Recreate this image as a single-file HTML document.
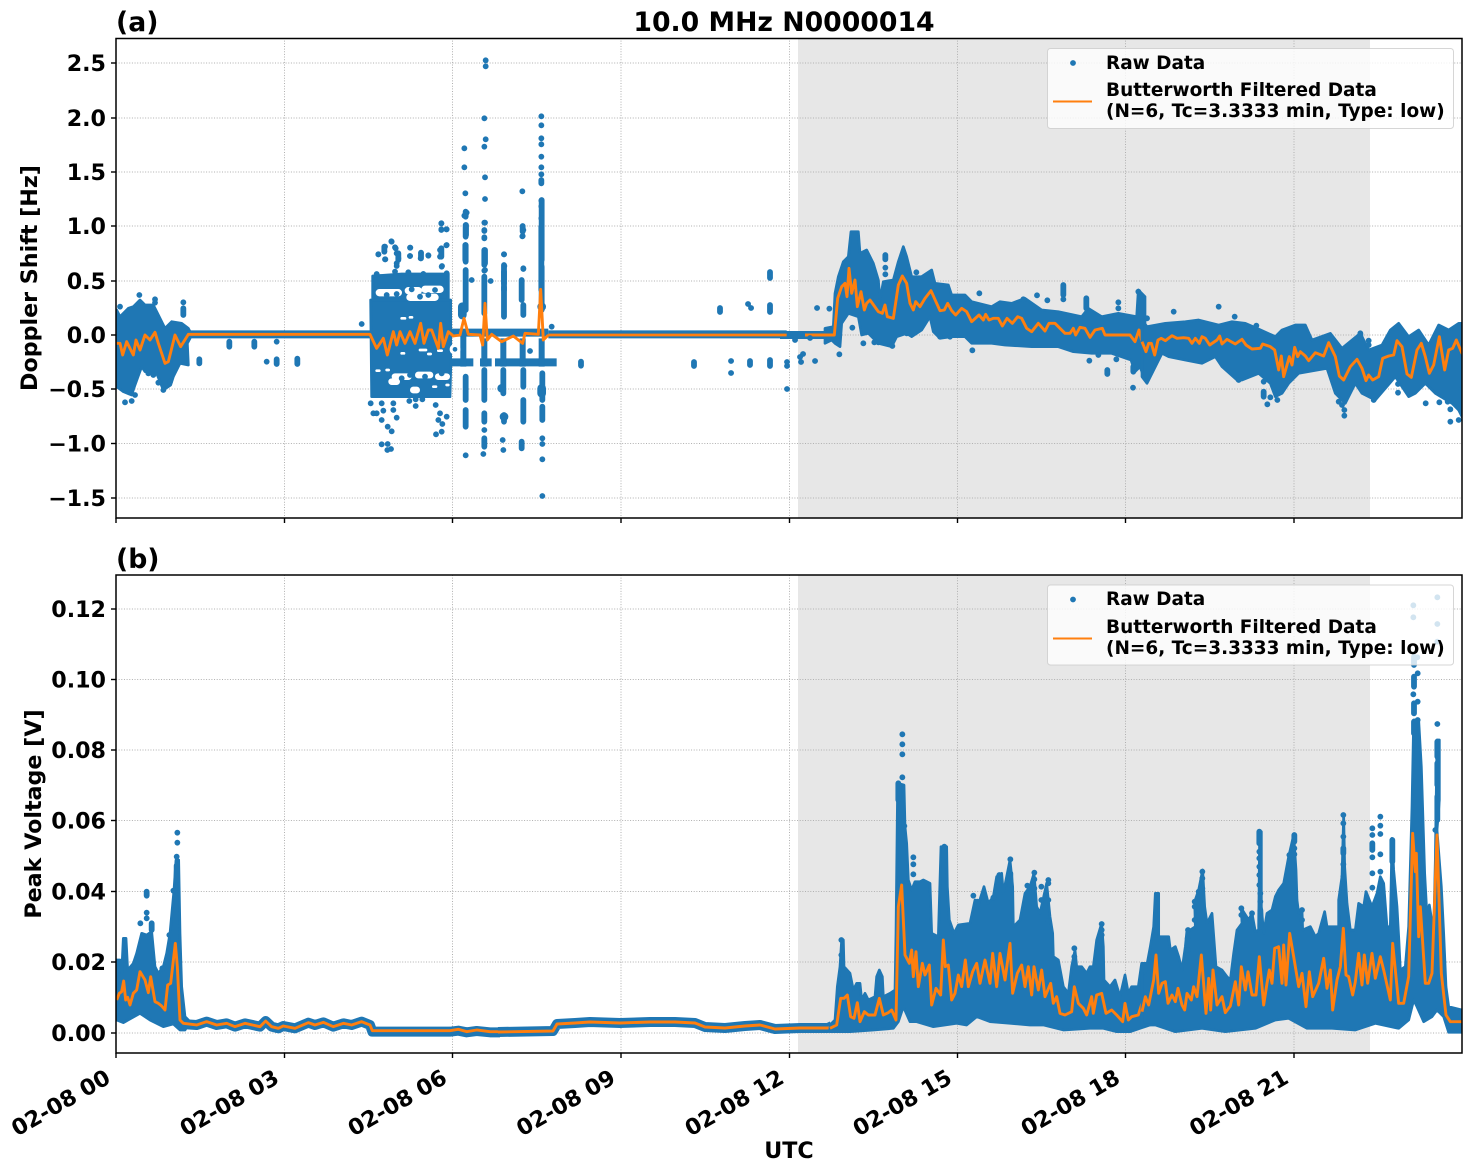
<!DOCTYPE html>
<html><head><meta charset="utf-8"><style>
html,body{margin:0;padding:0;background:#fff}
svg{display:block}
text{font-family:"DejaVu Sans",sans-serif;font-weight:bold;fill:#000}
.tk{font-size:22.2px}
.lg{font-size:18.48px}
.grid line{stroke:#b0b0b0;stroke-width:1;stroke-dasharray:1 1.65}
.tick line{stroke:#000;stroke-width:1.4}
.b{fill:#1f77b4;stroke:#1f77b4;stroke-width:2.7;stroke-linejoin:round;vector-effect:non-scaling-stroke}
.d{fill:none;stroke:#1f77b4;stroke-width:5.8;stroke-linecap:round;vector-effect:non-scaling-stroke}
.o{fill:none;stroke:#ff7f0e;stroke-width:2.9;stroke-linejoin:round;vector-effect:non-scaling-stroke}
</style></head><body>
<svg xmlns="http://www.w3.org/2000/svg" width="1472" height="1172" viewBox="0 0 1472 1172">
<defs>
<clipPath id="ca"><rect x="116" y="38.5" width="1346" height="479.5"/></clipPath>
<clipPath id="cb"><rect x="116" y="575" width="1346" height="478"/></clipPath>
</defs>
<rect width="1472" height="1172" fill="#fff"/>

<!-- shading -->
<rect x="798" y="38.5" width="572" height="479.5" fill="#e7e7e7"/>
<rect x="798" y="575" width="572" height="478" fill="#e7e7e7"/>

<!-- grids -->
<g class="grid">
<line x1="116" x2="1462" y1="63" y2="63"/><line x1="116" x2="1462" y1="118" y2="118"/><line x1="116" x2="1462" y1="172" y2="172"/><line x1="116" x2="1462" y1="226" y2="226"/><line x1="116" x2="1462" y1="281" y2="281"/><line x1="116" x2="1462" y1="335" y2="335"/><line x1="116" x2="1462" y1="389" y2="389"/><line x1="116" x2="1462" y1="443.5" y2="443.5"/><line x1="116" x2="1462" y1="498" y2="498"/>
<line x1="284.5" x2="284.5" y1="38" y2="518"/><line x1="452.5" x2="452.5" y1="38" y2="518"/><line x1="621" x2="621" y1="38" y2="518"/><line x1="789.5" x2="789.5" y1="38" y2="518"/><line x1="957.5" x2="957.5" y1="38" y2="518"/><line x1="1125.5" x2="1125.5" y1="38" y2="518"/><line x1="1294" x2="1294" y1="38" y2="518"/>
<line x1="116" x2="1462" y1="609" y2="609"/><line x1="116" x2="1462" y1="679.5" y2="679.5"/><line x1="116" x2="1462" y1="750" y2="750"/><line x1="116" x2="1462" y1="820.5" y2="820.5"/><line x1="116" x2="1462" y1="891.5" y2="891.5"/><line x1="116" x2="1462" y1="962" y2="962"/><line x1="116" x2="1462" y1="1033" y2="1033"/>
<line x1="284.5" x2="284.5" y1="575" y2="1053"/><line x1="452.5" x2="452.5" y1="575" y2="1053"/><line x1="621" x2="621" y1="575" y2="1053"/><line x1="789.5" x2="789.5" y1="575" y2="1053"/><line x1="957.5" x2="957.5" y1="575" y2="1053"/><line x1="1125.5" x2="1125.5" y1="575" y2="1053"/><line x1="1294" x2="1294" y1="575" y2="1053"/>
</g>

<!-- PANEL A DATA -->
<g clip-path="url(#ca)">
<!-- left + block, crop (100,200) x3 -->
<g transform="translate(100 200) scale(.33333)">
<polygon class="b" points="50,330 60,350 85,325 100,320 120,300 135,315 160,315 170,335 195,385 215,365 245,370 265,385 270,395 270,415 262,430 265,495 240,490 220,530 212,555 190,570 170,520 135,515 125,500 105,555 95,585 70,575 50,560"/>
<path d="M265 403H810" fill="none" stroke="#1f77b4" stroke-width="24"/>
<polygon class="b" points="812,300 1052,300 1052,510 1050,590 815,590"/>
<polygon class="b" points="818,228 905,222 1045,222 1045,262 1045,300 818,300"/>
<path d="M1050 398H1345" fill="none" stroke="#1f77b4" stroke-width="24"/>
<path d="M1345 403H2060" fill="none" stroke="#1f77b4" stroke-width="24"/>
<path d="M1050 487H1120M1140 487H1175M1185 487H1370" fill="none" stroke="#1f77b4" stroke-width="24"/>
<path d="M1090 405V500M1153 415V500M1210 415V500M1268 415V500M1325 415V500" fill="none" stroke="#1f77b4" stroke-width="18"/>
<!-- holes -->
<g fill="none" stroke="#fff" stroke-linecap="round">
<path stroke-width="22" d="M838 278H895M925 272H955M975 268H1020M930 292H1005"/>
<path stroke-width="20" d="M885 530H925M955 525H990M1015 530H1040M875 545H890M940 570H950"/>
<path stroke-width="8" d="M830 512H838M860 510H866M905 355H915M930 352H936M960 450H978M905 460H912M1015 452H1025M985 462H992M1000 560H1008M1040 555H1045"/>
<circle cx="1065" cy="448" r="9" stroke-width="14"/>
</g>
<circle cx="1065" cy="448" r="7" fill="#1f77b4"/>
<path class="d" d="M860 285h.1M890 282h.1M960 290h.1M985 285h.1M935 268h.1M1005 270h.1M905 535h.1M975 530h.1M930 525h.1M1025 520h.1"/>
<path class="d" d="M1097 35V50M1097 75V110M1097 135V185M1097 210V330M1097 530V600M1097 630V680M1097 766h.1M1153 68h.1M1153 90h.1M1153 115h.1M1153 150V195M1153 212h.1M1153 230V340M1153 510V600M1153 640V665M1153 690h.1M1153 715V740M1150 762h.1M1212 163h.1M1212 195V250M1212 262V350M1210 510V580M1212 645V665M1208 720h.1M1210 750h.1M1268 78h.1M1270 90h.1M1268 108h.1M1270 205h.1M1265 240V300M1270 315V345M1270 510V560M1270 600V665M1265 725V745M1325 0V180M1325 200V330M1327 520V600M1327 620V660M1327 715h.1M1327 732h.1M1327 778h.1M1327 888h.1"/>
<path class="d" style="stroke-width:8.7" d="M1087 320V345M1205 565h.1M1325 320h.1M1325 565V580M1212 650h.1"/>
<path class="d" d="M60 320h.1M118 285h.1M165 298h.1M165 308h.1M250 307h.1M250 325V345M298 478V490M388 425V440M463 425V440M500 485h.1M530 478V492M592 476V492M75 607h.1M95 603h.1M105 585h.1M190 570h.1M785 372h.1M1443 485V497M1290 453h.1M1172 243h.1M1115 240h.1M1355 380h.1M530 425h.1M145 520h.1M160 525h.1M175 548h.1M210 545h.1
M875 125h.1M855 140h.1M853 155h.1M835 163h.1M885 142h.1M890 160h.1M895 175h.1M855 178h.1M890 190h.1M931 143h.1M930 168h.1M963 158h.1M962 175h.1M985 167h.1M1024 70h.1M1024 88h.1M1040 88h.1M1040 135h.1M1020 150h.1M1020 170h.1M1026 198h.1M830 222h.1M885 215h.1M925 217h.1M970 222h.1M1040 220h.1
M830 640h.1M850 632h.1M880 630h.1M890 653h.1M845 660h.1M863 680h.1M875 694h.1M928 603h.1M947 598h.1M967 598h.1M947 618h.1M1007 615h.1M1020 640h.1M1040 650h.1M1015 660h.1M1027 672h.1M1025 695h.1M1008 703h.1M845 733h.1M863 732h.1M862 750h.1M873 747h.1M812 610h.1M845 610h.1M880 610h.1M820 640h.1"/>
</g>
<!-- top scattered, crop (360,50) x3 -->
<g transform="translate(360 50) scale(.33333)">
<path class="d" d="M377 31h.1M377 49h.1M373 205h.1M377 268h.1M373 290h.1M375 382h.1M375 447h.1M313 295h.1M313 352h.1M316 430h.1M320 488h.1M313 497h.1M318 525V555M375 518h.1M373 543h.1M373 562h.1M375 600V640M316 585V630M432 613h.1M433 648h.1M375 660h.1M487 424h.1M488 530V545M487 559h.1M490 657h.1M544 199h.1M544 226h.1M544 265h.1M544 283h.1M544 320h.1M544 352h.1M544 373h.1M544 390V400M544 452h.1M544 469h.1M544 505h.1M544 530V720M244 520h.1M244 540h.1M259 538h.1M259 586h.1M244 595V620M245 650h.1M94 574h.1M73 590V605M55 613h.1M76 628h.1M107 595h.1M115 610V630M110 648h.1M150 593h.1M150 618h.1M183 610V625M205 616h.1M145 668h.1M190 672h.1M432 665V720"/>
</g>
<path d="M780 335H838" fill="none" stroke="#1f77b4" stroke-width="8"/>
<path class="d" d="M817 308h.1M795 340h.1M787 366h.1M787 389h.1M800 357h.1M801 362h.1M815 361h.1M803 354h.1"/>
<!-- right, crop (825,220) x3 -->
<g transform="translate(825 220) scale(.33333)">
<polygon class="b" points="0,325 25,320 30,220 40,170 55,125 70,110 78,35 100,35 105,100 125,90 145,130 160,180 165,240 175,185 205,180 220,125 235,80 245,110 260,170 290,170 320,150 330,190 370,195 380,225 420,225 440,245 500,260 525,245 560,250 600,235 650,270 700,275 770,290 790,265 830,290 880,280 935,290 940,210 960,230 960,480 945,440 930,455 918,420 860,400 800,400 745,395 700,380 620,380 540,375 500,370 440,370 420,350 380,350 345,355 325,335 315,290 290,330 260,350 245,340 215,350 200,380 160,370 130,340 110,345 100,290 70,280 50,310 45,380 30,370 20,360 0,370"/>
<path class="d" d="M13 266h.1M43 403h.1M82 323h.1M115 370h.1M148 367h.1M160 367h.1M181 105V118M181 143h.1M181 163h.1M274 157h.1M245 340h.1M463 220h.1M636 226h.1M595 238h.1M667 241h.1M715 195V225M715 238h.1M784 235V265M880 247h.1M880 265h.1M940 215h.1M793 422h.1M820 405h.1M847 450V462M874 418h.1M924 503h.1M925 440V455M442 391h.1M345 350h.1M375 350h.1M202 378h.1"/>
<polyline class="o" points="-60,345 28,345 38,235 50,200 60,190 66,230 72,145 80,220 90,180 97,260 108,215 118,270 125,250 135,240 160,275 172,280 180,255 187,290 205,295 220,195 232,168 245,190 255,250 265,270 272,245 285,260 300,235 318,212 335,250 345,272 358,270 368,250 380,272 392,285 410,265 425,275 440,305 462,285 475,300 482,283 492,300 505,295 520,295 532,318 546,295 562,310 578,290 590,295 605,325 620,335 640,310 660,333 672,310 690,310 705,325 720,340 735,340 745,325 752,345 765,322 780,325 795,352 810,330 832,325 840,345 860,345 875,345 915,345 930,365 942,330 951,365"/>
</g>
<!-- right, crop (1142,270) x3 -->
<g transform="translate(1142 270) scale(.33333)">
<polygon class="b" points="0,150 15,170 70,160 130,155 170,150 230,165 270,155 310,160 345,175 400,200 420,180 460,165 490,165 510,210 565,190 600,235 655,190 680,240 720,225 745,180 770,160 800,200 830,180 860,225 890,165 920,180 950,160 975,160 975,470 950,420 930,400 880,370 850,340 820,370 800,380 760,320 700,390 660,370 640,340 610,400 580,370 555,295 470,310 440,340 420,370 400,380 385,340 350,310 300,330 285,330 240,290 220,260 180,280 130,270 80,260 60,250 40,290 15,340 0,320"/>
<path class="d" d="M230 110h.1M95 125h.1M15 145h.1M278 140h.1M343 167h.1M655 190V205M680 212h.1M680 225h.1M365 335h.1M365 365V380M385 382h.1M376 403h.1M406 390h.1M607 420h.1M607 437h.1M768 342h.1M768 368h.1M851 400h.1M892 397h.1M917 395h.1M925 418h.1M925 455h.1M950 450h.1M958 360h.1M950 410h.1M590 395h.1M600 405h.1M695 390h.1M290 330h.1"/>
<polyline class="o" points="0,215 12,245 20,220 28,220 38,255 48,210 58,205 70,212 90,197 105,205 125,203 140,205 150,220 160,205 172,220 180,200 190,205 203,225 225,210 233,198 240,222 255,208 280,222 300,208 312,225 330,237 355,235 362,222 385,230 398,240 410,300 418,258 425,320 435,285 442,260 450,285 458,232 467,260 475,245 490,258 500,272 520,248 545,258 560,218 580,260 592,318 605,330 625,290 645,268 660,295 672,332 680,315 692,330 710,320 722,265 740,258 755,255 765,212 780,230 795,312 808,322 825,240 838,220 850,260 862,310 875,285 892,200 908,300 920,240 932,235 943,210 960,250 970,250"/>
</g>
<g transform="translate(100 200) scale(.33333)">
<path d="M265 403H810M1345 405H2060" fill="none" stroke="#ff7f0e" stroke-width="8"/>
<polyline class="o" points="50,430 60,430 68,465 80,425 100,465 108,420 120,450 135,405 150,420 165,397 175,430 195,490 205,485 225,405 242,440 265,403 810,403 830,445 850,415 862,465 880,395 890,435 900,395 915,430 930,395 945,430 962,370 972,430 985,390 995,390 1015,445 1022,370 1030,440 1045,395 1060,408 1080,405 1092,355 1105,403 1140,405 1148,435 1155,310 1162,420 1175,403 1205,425 1240,408 1268,430 1275,400 1315,403 1322,268 1330,420 1345,405"/>
</g>
<path class="d" d="M694 362V366M720 308V312M731 361h.1M731 373h.1M748 304h.1M751 308h.1M750 361V365M770 272V278M770 305V312M770 360V366M787 362h.1M810 338h.1"/>
</g>

<!-- PANEL B DATA -->
<g clip-path="url(#cb)">
<g transform="translate(0 800) scale(.33333)">
<polygon class="b" points="350,480 360,480 365,520 370,415 378,415 383,510 400,490 410,460 425,400 440,405 455,395 465,500 475,520 490,500 500,460 510,400 522,270 528,180 536,180 540,400 545,560 555,650 570,665 555,690 540,690 520,672 490,680 450,660 420,640 370,668 350,660"/>
<polyline fill="none" stroke="#1f77b4" stroke-width="30" stroke-linejoin="round" points="545,672 590,675 620,665 650,675 680,670 705,680 735,670 780,680 797,663 815,680 835,685 850,678 885,685 925,668 945,675 970,667 1000,680 1030,670 1055,675 1085,665 1110,675 1117,695 1350,695 1375,692 1400,697 1430,693 1470,697 1500,697"/>
<path class="d" d="M532 98h.1M532 128h.1M530 170h.1M440 275V287M440 338h.1M440 355h.1M421 370h.1M455 370V390M487 505h.1M530 197V240M520 272h.1M508 405h.1"/>
<polyline class="o" points="350,600 358,580 365,575 371,543 377,600 383,592 390,615 400,580 410,570 420,515 435,540 445,578 452,530 465,605 475,610 485,618 495,630 503,555 512,550 526,430 532,500 540,660 550,670 590,675 620,665 650,675 680,670 705,680 735,670 780,680 797,663 815,680 835,685 850,678 885,685 925,668 945,675 970,667 1000,680 1030,670 1055,675 1085,665 1110,675 1117,692 1350,692 1375,688 1400,695 1430,690 1470,695 1500,695"/>
</g>
<polyline fill="none" stroke="#1f77b4" stroke-width="10" stroke-linejoin="round" points="498,1032 553,1031 557,1024 575,1023 590,1022 620,1023 650,1022 675,1022 695,1023 705,1027 725,1028 745,1026 760,1025 775,1029 800,1028 828,1028 832,1026"/>
<polyline fill="none" stroke="#ff7f0e" stroke-width="2.9" stroke-linejoin="round" points="498,1032 553,1031 557,1024 575,1023 590,1022 620,1023 650,1022 675,1022 695,1023 705,1027 725,1028 745,1026 760,1025 775,1029 800,1028 828,1028 832,1026"/>
<!-- crop (830,720) x3 -->
<g transform="translate(830 720) scale(.33333)">
<polygon class="b" points="0,915 15,900 22,800 30,740 35,660 40,660 42,740 60,760 70,810 80,790 90,790 95,840 105,820 115,840 135,830 140,770 148,750 157,770 160,830 180,820 195,810 198,640 203,190 222,195 225,320 230,370 235,480 245,510 255,485 270,485 280,480 300,490 305,640 325,650 333,380 350,380 352,500 358,600 372,640 385,615 420,610 435,540 440,570 462,500 475,550 490,530 500,470 515,460 520,520 540,420 548,500 550,620 570,600 585,520 600,500 612,460 620,560 630,580 650,490 660,590 668,640 670,710 685,720 700,800 715,820 725,740 735,690 740,740 755,740 770,760 780,740 790,740 800,660 815,610 820,680 822,780 840,800 855,780 870,830 885,765 895,820 905,800 925,800 935,730 950,730 960,720 960,915 900,935 860,935 820,925 780,925 700,930 640,915 600,915 540,910 480,905 440,890 410,915 380,910 310,920 260,905 240,905 220,860 205,905 190,925 130,930 60,935 0,935"/>
<path class="d" d="M217 43h.1M217 73h.1M217 103h.1M217 172h.1M250 412h.1M250 433h.1M250 463h.1M34 660h.1M34 705h.1M541 418h.1M508 465h.1M508 480h.1M613 458h.1M613 478h.1M655 480h.1M655 490h.1M655 540h.1M430 527h.1M442 545h.1M442 555h.1M613 505h.1M592 497h.1M634 500h.1M634 540h.1M613 552h.1M655 603h.1M815 612h.1M815 630h.1M815 645h.1M733 685h.1M733 710h.1M490 533h.1M343 380V410M541 460V495M205 190V240M223 318h.1"/>
<polyline class="o" points="0,925 20,915 32,835 42,835 52,825 62,890 72,895 82,848 90,905 103,875 115,885 135,885 148,835 160,885 175,878 185,870 198,900 205,560 215,495 225,705 238,730 245,690 250,770 258,695 265,800 277,730 285,765 298,735 305,855 318,805 332,825 340,660 346,740 355,735 365,840 375,820 385,765 395,800 406,720 415,800 428,755 440,730 450,790 465,720 480,790 488,700 500,800 510,700 525,780 540,670 548,820 562,760 575,735 585,800 595,740 605,825 612,740 625,810 635,750 645,830 662,790 670,850 680,830 690,880 705,885 725,875 733,800 745,850 760,865 770,885 785,830 790,880 800,825 815,820 828,880 845,870 860,885 878,905 885,850 895,900 905,890 925,885 936,850"/>
</g>
<!-- crop (1142,720) x3 -->
<g transform="translate(1142 720) scale(.33333)">
<polygon class="b" points="0,730 10,760 25,680 35,620 40,520 50,520 50,650 80,650 85,690 100,680 110,710 120,750 130,680 135,630 145,630 160,620 158,545 170,510 182,450 188,560 195,610 210,580 222,740 240,750 255,770 265,780 275,700 285,630 300,610 298,565 320,600 330,580 340,635 350,630 353,335 358,335 358,560 365,640 375,580 390,570 400,530 410,510 425,490 440,410 455,345 462,450 465,540 470,580 480,570 482,630 505,620 520,650 530,640 548,575 555,620 590,620 590,540 600,470 605,285 608,440 615,550 625,630 640,630 650,550 665,560 672,515 690,560 705,520 715,470 725,490 735,620 745,620 750,355 755,450 765,560 770,650 775,750 790,740 800,620 810,260 815,0 830,0 838,140 848,460 855,590 862,555 875,640 880,420 885,60 892,60 892,240 885,330 898,500 905,640 912,800 920,860 960,870 975,870 975,937 920,937 905,890 885,870 870,890 845,905 825,860 815,840 800,900 770,925 700,910 640,930 570,925 495,925 440,895 400,900 340,925 250,935 180,925 100,935 40,915 0,915"/>
<path class="d" d="M604 285h.1M604 310h.1M604 350h.1M604 385V400M604 433h.1M604 470h.1M352 335V370M352 395h.1M352 415h.1M352 440h.1M352 465h.1M352 495h.1M355 520h.1M355 545h.1M181 455h.1M181 475h.1M181 505h.1M170 515h.1M457 345V365M457 385h.1M457 403h.1M442 405h.1M691 325h.1M691 345h.1M691 370V390M691 412h.1M691 460h.1M691 503h.1M715 290h.1M715 317h.1M715 342h.1M715 403h.1M715 455h.1M751 360V425M886 12h.1M886 65V110M886 130V195M886 230V300M880 330h.1M298 565h.1M298 585h.1M330 580h.1M355 570V620M480 570h.1M480 600h.1M158 545h.1M158 560h.1M158 600h.1M138 630h.1M137 655h.1M137 690h.1"/>
<polyline class="o" points="0,875 10,830 20,855 35,780 42,705 50,820 60,790 70,785 78,850 90,825 100,845 108,805 120,855 128,870 135,820 148,840 155,800 165,830 178,705 192,880 200,775 206,870 213,750 225,855 240,830 250,878 265,858 280,785 290,855 298,740 310,810 318,755 330,825 342,825 352,710 365,855 375,790 382,750 390,790 398,685 410,680 420,790 425,675 432,795 443,640 455,710 470,800 480,760 492,860 502,755 512,830 530,790 545,715 555,805 565,750 572,870 585,780 595,740 604,625 612,765 620,770 632,825 640,785 650,700 660,795 667,705 677,790 690,700 700,775 715,710 725,750 745,840 752,670 770,850 785,850 800,770 812,340 820,455 823,400 830,650 835,560 850,790 860,790 870,760 885,345 898,760 912,885 925,905 945,905 975,905"/>
</g>
<g transform="translate(1040 570) scale(.33333)">
<path class="d" d="M1120 106h.1M1120 142h.1M1192 82h.1M1192 162h.1M1192 215h.1M1122 260V285M1132 262h.1M1133 310h.1M1122 320V350M1120 373h.1M1122 400V430M1133 395h.1M1122 455V490M1133 450h.1"/>
</g>
</g>

<!-- spines -->
<rect x="116" y="38.5" width="1346" height="479.5" fill="none" stroke="#000" stroke-width="1.5"/>
<rect x="116" y="575" width="1346" height="478" fill="none" stroke="#000" stroke-width="1.5"/>

<!-- ticks -->
<g class="tick">
<line x1="111" x2="116" y1="63" y2="63"/><line x1="111" x2="116" y1="118" y2="118"/><line x1="111" x2="116" y1="172" y2="172"/><line x1="111" x2="116" y1="226" y2="226"/><line x1="111" x2="116" y1="281" y2="281"/><line x1="111" x2="116" y1="335" y2="335"/><line x1="111" x2="116" y1="389" y2="389"/><line x1="111" x2="116" y1="443.5" y2="443.5"/><line x1="111" x2="116" y1="498" y2="498"/>
<line x1="111" x2="116" y1="609" y2="609"/><line x1="111" x2="116" y1="679.5" y2="679.5"/><line x1="111" x2="116" y1="750" y2="750"/><line x1="111" x2="116" y1="820.5" y2="820.5"/><line x1="111" x2="116" y1="891.5" y2="891.5"/><line x1="111" x2="116" y1="962" y2="962"/><line x1="111" x2="116" y1="1033" y2="1033"/>
<line x1="116" x2="116" y1="518" y2="523"/><line x1="284.5" x2="284.5" y1="518" y2="523"/><line x1="452.5" x2="452.5" y1="518" y2="523"/><line x1="621" x2="621" y1="518" y2="523"/><line x1="789.5" x2="789.5" y1="518" y2="523"/><line x1="957.5" x2="957.5" y1="518" y2="523"/><line x1="1125.5" x2="1125.5" y1="518" y2="523"/><line x1="1294" x2="1294" y1="518" y2="523"/>
<line x1="116" x2="116" y1="1053" y2="1058"/><line x1="284.5" x2="284.5" y1="1053" y2="1058"/><line x1="452.5" x2="452.5" y1="1053" y2="1058"/><line x1="621" x2="621" y1="1053" y2="1058"/><line x1="789.5" x2="789.5" y1="1053" y2="1058"/><line x1="957.5" x2="957.5" y1="1053" y2="1058"/><line x1="1125.5" x2="1125.5" y1="1053" y2="1058"/><line x1="1294" x2="1294" y1="1053" y2="1058"/>
</g>

<!-- y tick labels -->
<g class="tk" text-anchor="end">
<text x="106" y="71">2.5</text><text x="106" y="126">2.0</text><text x="106" y="180">1.5</text><text x="106" y="234">1.0</text><text x="106" y="289">0.5</text><text x="106" y="343">0.0</text><text x="106" y="397">−0.5</text><text x="106" y="451.5">−1.0</text><text x="106" y="506">−1.5</text>
<text x="106" y="617">0.12</text><text x="106" y="687.5">0.10</text><text x="106" y="758">0.08</text><text x="106" y="828.5">0.06</text><text x="106" y="899.5">0.04</text><text x="106" y="970">0.02</text><text x="106" y="1041">0.00</text>
</g>

<!-- x tick labels -->
<g class="tk" text-anchor="end">
<text transform="translate(112 1082) rotate(-30)">02-08 00</text>
<text transform="translate(280.5 1082) rotate(-30)">02-08 03</text>
<text transform="translate(448.5 1082) rotate(-30)">02-08 06</text>
<text transform="translate(617 1082) rotate(-30)">02-08 09</text>
<text transform="translate(785.5 1082) rotate(-30)">02-08 12</text>
<text transform="translate(953.5 1082) rotate(-30)">02-08 15</text>
<text transform="translate(1121.5 1082) rotate(-30)">02-08 18</text>
<text transform="translate(1290 1082) rotate(-30)">02-08 21</text>
</g>

<!-- axis labels / titles -->
<text x="784" y="31" text-anchor="middle" style="font-size:26.7px">10.0 MHz N0000014</text>
<text x="116" y="31" style="font-size:26.7px">(a)</text>
<text x="116" y="568" style="font-size:26.7px">(b)</text>
<text x="789" y="1158" text-anchor="middle" class="tk">UTC</text>
<text transform="translate(37 278) rotate(-90)" text-anchor="middle" class="tk">Doppler Shift [Hz]</text>
<text transform="translate(41 814) rotate(-90)" text-anchor="middle" class="tk">Peak Voltage [V]</text>

<!-- legends -->
<rect x="1047.5" y="48.5" width="406" height="80" rx="3" fill="#fff" fill-opacity=".8" stroke="#ccc" stroke-opacity=".8" stroke-width="1"/>
<circle cx="1073" cy="63" r="2.9" fill="#1f77b4"/>
<line x1="1053" x2="1092" y1="101.5" y2="101.5" stroke="#ff7f0e" stroke-width="2"/>
<text class="lg" x="1106" y="69">Raw Data</text>
<text class="lg" x="1106" y="96">Butterworth Filtered Data</text>
<text class="lg" x="1106" y="117">(N=6, Tc=3.3333 min, Type: low)</text>

<rect x="1047.5" y="585" width="406" height="80" rx="3" fill="#fff" fill-opacity=".8" stroke="#ccc" stroke-opacity=".8" stroke-width="1"/>
<circle cx="1073" cy="599.5" r="2.9" fill="#1f77b4"/>
<line x1="1053" x2="1092" y1="638.5" y2="638.5" stroke="#ff7f0e" stroke-width="2"/>
<text class="lg" x="1106" y="605">Raw Data</text>
<text class="lg" x="1106" y="633">Butterworth Filtered Data</text>
<text class="lg" x="1106" y="654">(N=6, Tc=3.3333 min, Type: low)</text>
</svg>
</body></html>
